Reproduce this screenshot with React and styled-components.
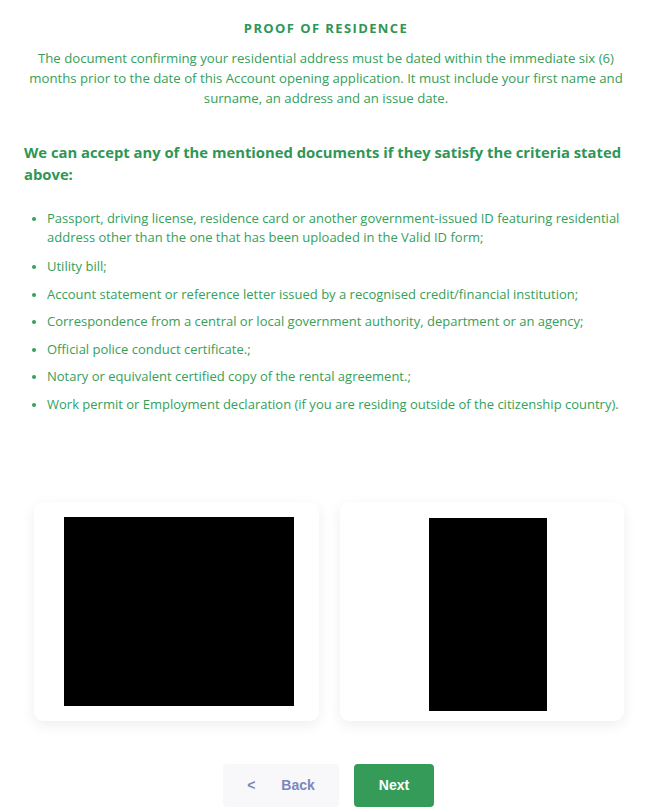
import styled, { createGlobalStyle } from "styled-components";

const GlobalStyle = createGlobalStyle`
  body {
    margin: 0;
    background: #ffffff;
    font-family: "Open Sans", "Noto Sans", sans-serif;
  }
`;

const Page = styled.main`
  padding: 18px 24px 0;
  color: #35a05a;
`;

const Title = styled.h1`
  margin: 0;
  text-align: center;
  font-size: 13px;
  font-weight: 700;
  letter-spacing: 1.4px;
  color: #2f9656;
  line-height: 20px;
`;

const Intro = styled.p`
  margin: 10px 0 0;
  text-align: center;
  font-size: 13.2px;
  line-height: 20px;
  padding: 0 4px;
`;

const Heading = styled.h2`
  margin: 33px 0 0;
  font-size: 14.8px;
  font-weight: 700;
  line-height: 22px;
  color: #2f9656;
`;

const List = styled.ul`
  margin: 24px 0 0;
  padding: 0 0 0 23px;
  font-size: 13px;
  line-height: 19px;
`;

const Item = styled.li`
  margin-bottom: 8.6px;
  &:first-child {
    margin-bottom: 10px;
  }
  &::marker {
    font-size: 11px;
  }
`;

const Cards = styled.div`
  display: grid;
  grid-template-columns: 1fr 1fr;
  gap: 21px;
  margin: 88px 4px 0 10px;
`;

const Card = styled.div`
  height: 219px;
  background: #fff;
  border-radius: 9px;
  box-shadow: 0 4px 14px rgba(0, 0, 0, 0.07);
  display: flex;
  align-items: center;
  justify-content: center;
`;

const Preview = styled.div`
  width: ${(p) => p.$w}px;
  height: ${(p) => p.$h}px;
  margin-left: ${(p) => p.$shift || 0}px;
  margin-top: ${(p) => p.$drop || 0}px;
  background: #000;
`;

const Actions = styled.div`
  display: flex;
  justify-content: center;
  gap: 15px;
  margin-top: 43px;
  padding-left: 5px;
`;

const Button = styled.button`
  height: 43px;
  border: none;
  border-radius: 4px;
  font-family: "Liberation Sans", Arial, sans-serif;
  font-size: 14px;
  font-weight: 700;
  padding: 0;
  cursor: pointer;
  background: ${(p) => (p.$primary ? "#349b58" : "#f8f8fa")};
  color: ${(p) => (p.$primary ? "#ffffff" : "#7c87ba")};
  width: ${(p) => (p.$primary ? "80px" : "116px")};
`;

const Arrow = styled.span`
  margin-right: 26px;
`;

const docs = [
  "Passport, driving license, residence card or another government-issued ID featuring residential address other than the one that has been uploaded in the Valid ID form;",
  "Utility bill;",
  "Account statement or reference letter issued by a recognised credit/financial institution;",
  "Correspondence from a central or local government authority, department or an agency;",
  "Official police conduct certificate.;",
  "Notary or equivalent certified copy of the rental agreement.;",
  "Work permit or Employment declaration (if you are residing outside of the citizenship country).",
];

export default function App() {
  return (
    <>
      <GlobalStyle />
      <Page>
        <Title>PROOF OF RESIDENCE</Title>
        <Intro>
          The document confirming your residential address must be dated within the immediate six (6)
          months prior to the date of this Account opening application. It must include your first name and
          surname, an address and an issue date.
        </Intro>
        <Heading>We can accept any of the mentioned documents if they satisfy the criteria stated above:</Heading>
        <List>
          {docs.map((d) => (
            <Item key={d}>{d}</Item>
          ))}
        </List>
        <Cards>
          <Card>
            <Preview $w={230} $h={189} $shift={6} />
          </Card>
          <Card>
            <Preview $w={118} $h={193} $shift={12} $drop={6} />
          </Card>
        </Cards>
        <Actions>
          <Button>
            <Arrow>&lt;</Arrow>Back
          </Button>
          <Button $primary>Next</Button>
        </Actions>
      </Page>
    </>
  );
}
